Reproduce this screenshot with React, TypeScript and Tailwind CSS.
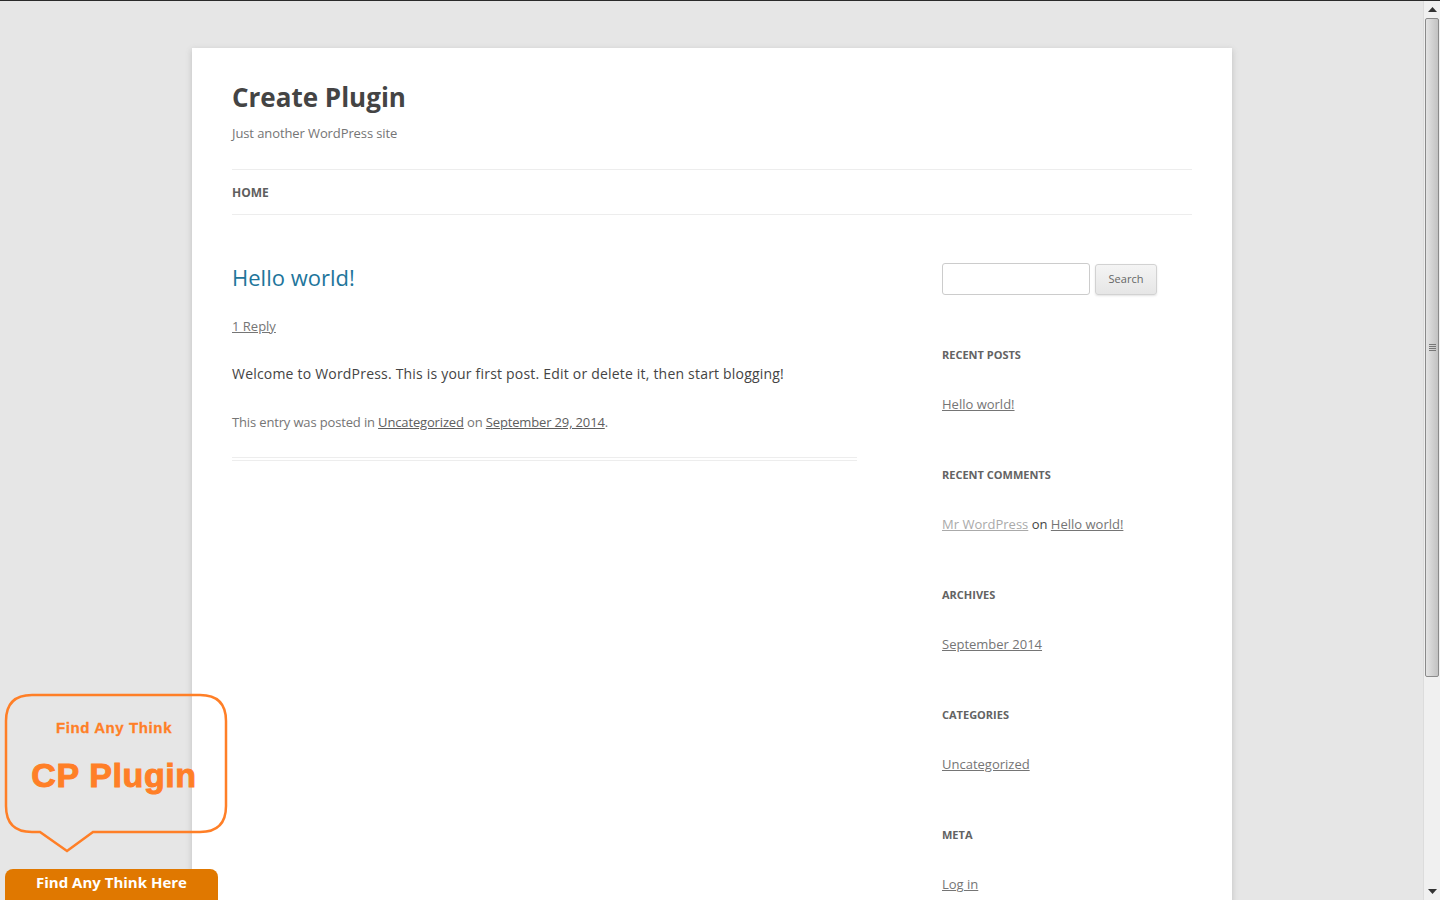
import React from "react";

const openSans = { fontFamily: "'Open Sans', 'Liberation Sans', sans-serif" };

function Widget({ title, children }: { title: string; children: React.ReactNode }) {
  return (
    <section className="mb-[49px]">
      <h3 className="text-[11px] leading-[20px] font-bold uppercase text-[#636363] mb-[27px] mt-px">{title}</h3>
      <div className="text-[13px] leading-[24px] text-[#444]">{children}</div>
    </section>
  );
}

function Scrollbar() {
  return (
    <div className="w-[17px] h-full bg-[#f0f0f0] border-l border-[#dcdcdc] flex flex-col items-center">
      <div className="h-[17px] flex items-center justify-center">
        <svg width="9" height="5" viewBox="0 0 9 5">
          <path d="M4.5 0 L9 5 L0 5 Z" fill="#333" />
        </svg>
      </div>
      <div className="w-[14px] h-[659px] rounded-[2px] border border-[#8a8a8a] bg-gradient-to-r from-[#e4e4e4] via-[#d2d2d2] to-[#c2c2c2] flex items-center justify-center">
        <div className="flex flex-col gap-[1px]">
          <div className="w-[7px] h-px bg-[#777]" />
          <div className="w-[7px] h-px bg-[#777]" />
          <div className="w-[7px] h-px bg-[#777]" />
          <div className="w-[7px] h-px bg-[#777]" />
        </div>
      </div>
      <div className="flex-1" />
      <div className="h-[17px] flex items-center justify-center">
        <svg width="9" height="5" viewBox="0 0 9 5">
          <path d="M0 0 L9 0 L4.5 5 Z" fill="#333" />
        </svg>
      </div>
    </div>
  );
}

function PromoBubble() {
  return (
    <>
      <div className="absolute left-0 top-[688px] w-[232px] h-[170px]">
        <svg width="232" height="170" viewBox="0 0 232 170" className="absolute inset-0">
          <path
            d="M32 6 H200 Q226 6 226 32 V117 Q226 143 200 143 H93 L67 162 L40 143 H32 Q6 143 6 117 V32 Q6 6 32 6 Z"
            fill="none"
            stroke="#ff7f27"
            strokeWidth="2.5"
          />
        </svg>
        <div className="relative flex flex-col items-center pt-[29px] w-[228px]" style={{ fontFamily: "'Liberation Sans', Arial, sans-serif" }}>
          <div className="text-[15px] leading-[20px] font-bold text-[#ff7f27] tracking-[0.6px] [-webkit-text-stroke:0.3px_#ff7f27]">Find Any Think</div>
          <div className="text-[34px] leading-[40px] font-bold text-[#ff7f27] mt-[17px] tracking-[0.6px] [-webkit-text-stroke:1px_#ff7f27]">CP Plugin</div>
        </div>
      </div>
      <div
        className="absolute left-[5px] top-[868px] w-[213px] h-[32px] bg-[#e07800] rounded-t-[8px] flex items-center justify-center pb-[5px] text-white text-[15px] font-bold"
        style={openSans}
      >
        Find Any Think Here
      </div>
    </>
  );
}

export default function App() {
  return (
    <div className="w-[1440px] h-[900px] overflow-hidden border-t border-[#2a2a2a] flex relative" style={openSans}>
      <div className="flex-1 h-full bg-[#e6e6e6] pt-[47px] pl-[192px] overflow-hidden">
        <div className="w-[1040px] bg-white px-10 shadow-[0_2px_6px_rgba(100,100,100,0.3)] pb-10">
          {/* Header */}
          <header className="pt-[25px]">
            <h1 className="text-[26px] leading-[48px] font-bold text-[#444]">Create Plugin</h1>
            <p className="text-[13px] leading-[24px] text-[#757575] tracking-[-0.1px]">Just another WordPress site</p>
          </header>
          <nav className="mt-[24px] border-t border-b border-[#ededed] h-[46px] flex items-center pt-px">
            <span className="text-[12px] font-bold uppercase text-[#5e5e5e]">Home</span>
          </nav>

          {/* Main */}
          <div className="flex mt-[48px]">
            <main className="w-[625px]">
              <article className="border-b-4 border-double border-[#ededed] pb-[23px]">
                <h2 className="text-[22px] leading-[30px] text-[#21759b] -mt-px">Hello world!</h2>
                <div className="mt-[22px] text-[13px] leading-[24px]">
                  <span className="text-[#757575] underline">1 Reply</span>
                </div>
                <p className="mt-[23px] text-[14px] leading-[24px] text-[#444] tracking-[0.2px] translate-y-px">
                  Welcome to WordPress. This is your first post. Edit or delete it, then start blogging!
                </p>
                <p className="mt-[25px] text-[13px] leading-[24px] text-[#757575] tracking-[-0.15px]">
                  This entry was posted in <span className="underline text-[#5e5e5e]">Uncategorized</span> on{" "}
                  <span className="underline text-[#5e5e5e]">September 29, 2014</span>.
                </p>
              </article>
            </main>

            <aside className="w-[250px] ml-auto">
              <form className="flex items-start gap-[5px] mb-[50px]">
                <input
                  className="w-[148px] h-[32px] border border-[#ccc] rounded-[3px] bg-white outline-none"
                  aria-label="Search"
                />
                <button
                  type="button"
                  className="mt-px w-[62px] h-[31px] rounded-[3px] border border-[#d2d2d2] bg-gradient-to-b from-[#f4f4f4] to-[#e6e6e6] shadow-[0_1px_2px_rgba(64,64,64,0.15)] text-[11px] text-[#666]"
                >
                  Search
                </button>
              </form>

              <Widget title="Recent Posts">
                <span className="underline text-[#757575]">Hello world!</span>
              </Widget>
              <Widget title="Recent Comments">
                <span className="underline text-[#aaa]">Mr WordPress</span> on{" "}
                <span className="underline text-[#757575]">Hello world!</span>
              </Widget>
              <Widget title="Archives">
                <span className="underline text-[#757575]">September 2014</span>
              </Widget>
              <Widget title="Categories">
                <span className="underline text-[#757575]">Uncategorized</span>
              </Widget>
              <Widget title="Meta">
                <span className="underline text-[#757575]">Log in</span>
              </Widget>
            </aside>
          </div>
        </div>
      </div>
      <Scrollbar />
      <PromoBubble />
    </div>
  );
}
